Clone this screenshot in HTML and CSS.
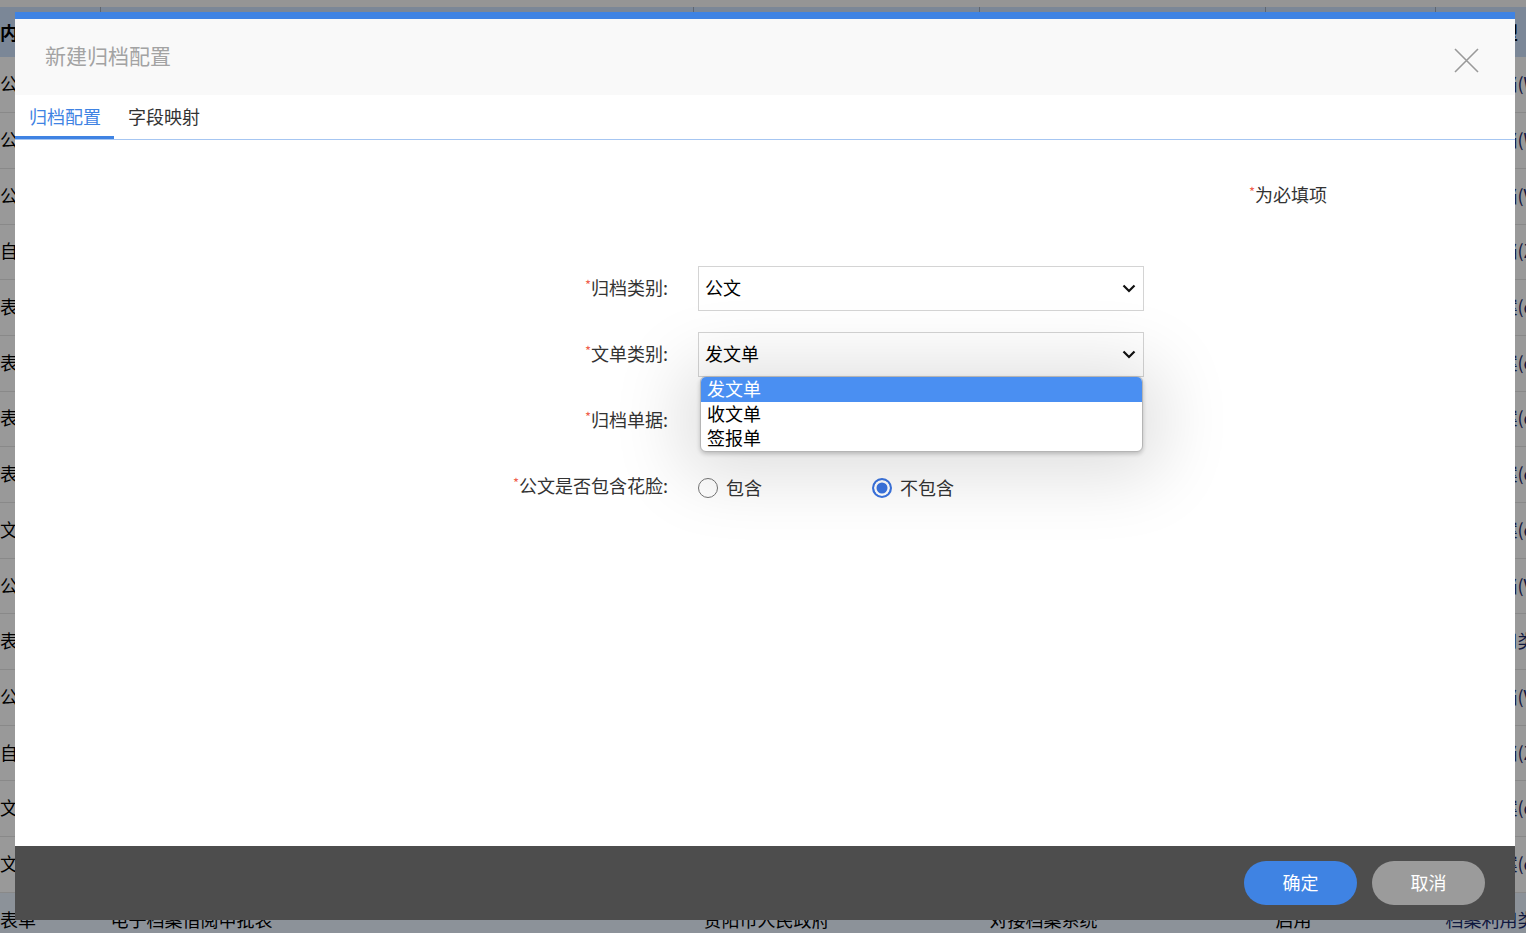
FILE: index.html
```html
<!DOCTYPE html>
<html lang="zh-CN">
<head>
  <meta charset="UTF-8">
  <title>新建归档配置</title>
  <link rel="stylesheet" href="styles.css">
</head>
<body>
  <div class="page">
    <table class="grid">
      <thead>
        <tr><th>内容</th><th>名称</th><th>所属单位</th><th>对接系统</th><th>状态</th><th>归档类型</th></tr>
      </thead>
      <tbody>
        <tr><td>公文</td><td>发文单归档</td><td>贵阳市人民政府</td><td>对接档案系统</td><td>启用</td><td>公文归档(WS)</td></tr>
        <tr><td>公文</td><td>收文单归档</td><td>贵阳市人民政府</td><td>对接档案系统</td><td>启用</td><td>公文归档(WS)</td></tr>
        <tr><td>公文</td><td>签报单归档</td><td>贵阳市人民政府</td><td>对接档案系统</td><td>启用</td><td>公文归档(VS)</td></tr>
        <tr><td>自定义</td><td>会议纪要归档</td><td>贵阳市人民政府</td><td>对接档案系统</td><td>启用</td><td>专题归档(ZT)</td></tr>
        <tr><td>表单</td><td>请示报告单</td><td>贵阳市人民政府</td><td>对接档案系统</td><td>启用</td><td>文书档案(cw)</td></tr>
        <tr><td>表单</td><td>用印申请表</td><td>贵阳市人民政府</td><td>对接档案系统</td><td>启用</td><td>文书档案(cw)</td></tr>
        <tr><td>表单</td><td>合同审批表</td><td>贵阳市人民政府</td><td>对接档案系统</td><td>启用</td><td>文书档案(cw)</td></tr>
        <tr><td>表单</td><td>出差审批单</td><td>贵阳市人民政府</td><td>对接档案系统</td><td>启用</td><td>文书档案(cw)</td></tr>
        <tr><td>文件</td><td>内部文件归档</td><td>贵阳市人民政府</td><td>对接档案系统</td><td>启用</td><td>文书档案(cw)</td></tr>
        <tr><td>公文</td><td>函件归档</td><td>贵阳市人民政府</td><td>对接档案系统</td><td>启用</td><td>公文归档(VS)</td></tr>
        <tr><td>表单</td><td>档案利用登记表</td><td>贵阳市人民政府</td><td>对接档案系统</td><td>启用</td><td>档案利用类</td></tr>
        <tr><td>公文</td><td>通知公告归档</td><td>贵阳市人民政府</td><td>对接档案系统</td><td>启用</td><td>公文归档(VS)</td></tr>
        <tr><td>自定义</td><td>专项工作归档</td><td>贵阳市人民政府</td><td>对接档案系统</td><td>启用</td><td>专题归档(ZT)</td></tr>
        <tr><td>文件</td><td>规范性文件</td><td>贵阳市人民政府</td><td>对接档案系统</td><td>启用</td><td>文书档案(cw)</td></tr>
        <tr><td>文件</td><td>工作简报</td><td>贵阳市人民政府</td><td>对接档案系统</td><td>启用</td><td>文书档案(cw)</td></tr>
        <tr class="current"><td>表单</td><td>电子档案借阅申批表</td><td>贵阳市人民政府</td><td>对接档案系统</td><td>启用</td><td>档案利用类</td></tr>
      </tbody>
    </table>
  </div>

  <div class="mask"></div>

  <div class="dialog">
    <div class="dialog-head">
      <span class="dialog-title">新建归档配置</span>
      <a class="dialog-close" href="#">
        <svg width="25" height="25" viewBox="0 0 25 25"><path d="M1 1L24 24M24 1L1 24" stroke="#9a9a9a" stroke-width="1.6" fill="none"/></svg>
      </a>
    </div>

    <div class="tabs">
      <span class="tab active">归档配置</span>
      <span class="tab">字段映射</span>
    </div>

    <div class="dialog-body">
      <p class="req-note"><i>*</i>为必填项</p>

      <div class="form">
        <div class="form-row">
          <label class="form-label"><i>*</i>归档类别:</label>
          <div class="select">
            <span>公文</span>
            <svg width="14" height="9" viewBox="0 0 14 9"><path d="M1.5 1.5L7 7L12.5 1.5" stroke="#111" stroke-width="2.2" fill="none"/></svg>
          </div>
        </div>

        <div class="form-row">
          <label class="form-label"><i>*</i>文单类别:</label>
          <div class="select">
            <span>发文单</span>
            <svg width="14" height="9" viewBox="0 0 14 9"><path d="M1.5 1.5L7 7L12.5 1.5" stroke="#111" stroke-width="2.2" fill="none"/></svg>
            <ul class="options">
              <li class="selected">发文单</li>
              <li>收文单</li>
              <li>签报单</li>
            </ul>
          </div>
        </div>

        <div class="form-row">
          <label class="form-label"><i>*</i>归档单据:</label>
          <div class="select blank"></div>
        </div>

        <div class="form-row">
          <label class="form-label"><i>*</i>公文是否包含花脸:</label>
          <div class="radios">
            <label class="radio"><span class="dot"></span>包含</label>
            <label class="radio"><span class="dot on"></span>不包含</label>
          </div>
        </div>
      </div>
    </div>

    <div class="dialog-foot">
      <button class="btn btn-ok">确定</button>
      <button class="btn btn-cancel">取消</button>
    </div>
  </div>
</body>
</html>
```

FILE: styles.css
```css
html, body {
  margin: 0;
  height: 100%;
  overflow: hidden;
}
body {
  font-family: "Noto Sans CJK SC", "Noto Sans", sans-serif;
  background: #f9f9f9;
}
.page {
  padding-top: 7px;
}

/* background list */
.grid {
  table-layout: fixed;
  border-collapse: collapse;
  width: 1630px;
  background: #fff;
  font-size: 18px;
  line-height: 22px;
  color: #000;
}
.grid th, .grid td {
  text-align: left;
  padding: 0 0 0 10px;
  white-space: nowrap;
  overflow: hidden;
}
.grid th:first-child, .grid td:first-child { padding-left: 0; }
.grid th:nth-child(1) { width: 100px; }
.grid th:nth-child(2) { width: 582px; }
.grid th:nth-child(3) { width: 275px; }
.grid th:nth-child(4) { width: 275px; }
.grid th:nth-child(5) { width: 159px; }
.grid th:nth-child(6) { width: 190px; }
.grid thead tr {
  height: 50px;
  background: #cde1fc;
}
.grid th {
  font-weight: bold;
  border-left: 1px solid #9eaabb;
}
.grid th:first-child { border-left: none; }
.grid tbody tr {
  height: 55.7px;
  border-bottom: 1px solid #e4e4e4;
}
.grid td { padding-bottom: 3px; }
.grid td:last-child { color: #1a2a6a; }
.grid tr.current { background: #e9f3ff; }

.mask {
  position: fixed;
  inset: 0;
  background: rgba(0, 0, 0, 0.4);
}

/* dialog */
.dialog {
  position: absolute;
  left: 15px;
  top: 12px;
  width: 1500px;
  height: 908px;
  display: flex;
  flex-direction: column;
  background: #fff;
  border-top: 7px solid #3f83e3;
  box-sizing: border-box;
}
.dialog-head {
  height: 76px;
  flex: none;
  display: flex;
  align-items: center;
  justify-content: space-between;
  padding: 0 36px 0 30px;
  background: #f9f9f9;
}
.dialog-title {
  font-size: 21px;
  color: #a3a3a3;
  margin-top: -4px;
}
.dialog-close {
  display: block;
  height: 25px;
  margin-top: 7px;
}
.tabs {
  flex: none;
  height: 44px;
  display: flex;
  border-bottom: 1px solid #a6c6f2;
}
.tab {
  padding: 0 14px;
  font-size: 18px;
  line-height: 42px;
  color: #333;
  box-sizing: border-box;
  height: 44px;
  white-space: nowrap;
}
.tab.active {
  color: #3f83e3;
  border-bottom: 3px solid #3f83e3;
  padding-right: 13px;
}

.dialog-body {
  flex: 1;
  padding-top: 42px;
}
.req-note {
  margin: 0 0 62px;
  padding-left: 1234px;
  font-size: 18px;
  line-height: 20px;
  color: #333;
}
i {
  font-style: normal;
  color: #f0604d;
  font-size: 13px;
  vertical-align: 5px;
}

.form-row {
  display: flex;
  align-items: center;
  height: 45px;
  margin-bottom: 21px;
}
.form-label {
  width: 683px;
  padding: 0 30px 3px 0;
  box-sizing: border-box;
  text-align: right;
  font-size: 18px;
  color: #333;
}
.select {
  position: relative;
  width: 446px;
  height: 45px;
  box-sizing: border-box;
  border: 1px solid #d4d4d4;
  display: flex;
  align-items: center;
  justify-content: space-between;
  padding: 0 7px 3px 6px;
  font-size: 18px;
  color: #000;
}
.select svg { margin-top: 3px; }
.select.blank { border-color: transparent; }

.options {
  position: absolute;
  left: 1px;
  top: 43px;
  width: 443px;
  margin: 0;
  padding: 0;
  list-style: none;
  background: #fff;
  border: 1px solid #b5b5b5;
  border-radius: 6px;
  box-sizing: border-box;
  box-shadow: 0 6px 70px 18px rgba(0, 0, 0, 0.13), 0 2px 4px rgba(0, 0, 0, 0.2);
  overflow: hidden;
  z-index: 2;
}
.options li {
  height: 24.6px;
  line-height: 22px;
  padding-left: 6px;
  font-size: 18px;
  color: #000;
}
.options li.selected {
  background: #4a8ff2;
  color: #fff;
}

.radios {
  display: flex;
  align-items: center;
  font-size: 18px;
  color: #333;
}
.radio {
  width: 174px;
  display: flex;
  align-items: center;
  gap: 8px;
  line-height: 22px;
}
.dot {
  width: 20px;
  height: 20px;
  box-sizing: border-box;
  border: 1.5px solid #767676;
  border-radius: 50%;
  background: #fff;
  margin-top: 2px;
}
.dot.on {
  border: 2px solid #3b74e0;
  background: #3b74e0;
  box-shadow: inset 0 0 0 2.5px #fff;
}

.dialog-foot {
  flex: none;
  height: 74px;
  box-sizing: border-box;
  padding: 15px 30px;
  background: #4d4d4d;
  display: flex;
  justify-content: flex-end;
  gap: 15px;
}
.btn {
  width: 113px;
  height: 44px;
  border: none;
  border-radius: 22px;
  font-family: inherit;
  font-size: 18px;
  line-height: 20px;
  padding-bottom: 3px;
  color: #fff;
  cursor: pointer;
}
.btn-ok { background: #3f83e3; }
.btn-cancel { background: #9b9b9b; }
```
